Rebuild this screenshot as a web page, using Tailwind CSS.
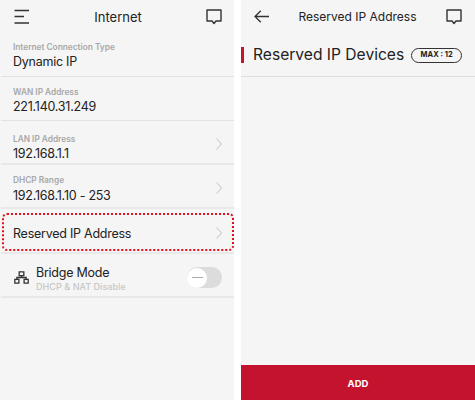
<!DOCTYPE html>
<html lang="en">
<head>
  <meta charset="UTF-8">
  <title>Internet</title>
  <script src="https://cdn.jsdelivr.net/npm/@tailwindcss/browser@4"></script>
</head>
<body class="bg-white font-['Inter',sans-serif] text-[#222]">
  <div class="flex w-[475px] h-[400px] overflow-hidden">

    <!-- left phone -->
    <div class="relative w-[234px] h-full bg-[#f5f5f5] shrink-0">
      <div class="flex items-center justify-between h-[34px] pl-[14px] pr-[12px]">
        <svg class="w-[16px] h-[16px]" viewBox="0 0 16 16" fill="none" stroke="#333" stroke-width="1.3">
          <path d="M0.5 1.5H15M0.5 7.5H10M0.5 14H15"/>
        </svg>
        <span class="text-[13px] leading-none">Internet</span>
        <svg class="w-[16px] h-[16px]" viewBox="0 0 16 16" fill="none" stroke="#333" stroke-width="1.4" stroke-linejoin="round">
          <path d="M1 1H15V12H10L8 14.5L6 12H1Z"/>
        </svg>
      </div>

      <div class="h-[43px] pl-[12px] pt-[8px] border-b border-[#e2e2e2] ml-px">
        <div class="text-[8.3px] leading-[11px] font-semibold text-[#a8a8a8]">Internet Connection Type</div>
        <div class="text-[12.5px] tracking-[-0.25px] leading-[18px]">Dynamic IP</div>
      </div>
      <div class="h-[44px] pl-[12px] pt-[10px] border-b border-[#e2e2e2] ml-px">
        <div class="text-[8.3px] leading-[11px] font-semibold text-[#a8a8a8]">WAN IP Address</div>
        <div class="text-[12.5px] tracking-[-0.25px] leading-[18px]">221.140.31.249</div>
      </div>
      <div class="flex items-start justify-between h-[44px] pl-[12px] pr-[12px] pt-[13px] border-b-2 border-[#e8e8e8] ml-px">
        <div>
          <div class="text-[8.3px] leading-[11px] font-semibold text-[#a8a8a8]">LAN IP Address</div>
          <div class="text-[12.5px] tracking-[-0.25px] leading-[18px]">192.168.1.1</div>
        </div>
        <svg class="w-[6px] h-[12px] mt-[4px]" viewBox="0 0 6 12" fill="none" stroke="#ccc" stroke-width="1.1"><path d="M0.5 0.5L5.5 6L0.5 11.5"/></svg>
      </div>
      <div class="flex items-start justify-between h-[44px] pl-[12px] pr-[12px] pt-[10px] border-b-2 border-[#e8e8e8] ml-px">
        <div>
          <div class="text-[8.3px] leading-[11px] font-semibold text-[#a8a8a8]">DHCP Range</div>
          <div class="text-[12.5px] tracking-[-0.25px] leading-[18px] mt-[1px]">192.168.1.10 - 253</div>
        </div>
        <svg class="w-[6px] h-[12px] mt-[7px]" viewBox="0 0 6 12" fill="none" stroke="#ccc" stroke-width="1.1"><path d="M0.5 0.5L5.5 6L0.5 11.5"/></svg>
      </div>
      <div class="flex items-center justify-between h-[45px] pl-[12px] pr-[12px] pt-[7px] border-b-2 border-[#e8e8e8] ml-px">
        <span class="text-[12.5px] tracking-[-0.25px] leading-none">Reserved IP Address</span>
        <svg class="w-[6px] h-[12px] -mt-[2px]" viewBox="0 0 6 12" fill="none" stroke="#ccc" stroke-width="1.1"><path d="M0.5 0.5L5.5 6L0.5 11.5"/></svg>
      </div>
      <div class="flex items-center h-[44px] pl-[13px] pr-[12px] pt-[7px] border-b-2 border-[#e8e8e8] ml-px">
        <svg class="w-[15px] h-[13px] mr-[7px] -mt-[3px]" viewBox="0 0 16 14" fill="none" stroke="#333" stroke-width="1.4">
          <path d="M5.5 1H10.5V5H5.5ZM0.8 9H5.2V13H0.8ZM10.8 9H15.2V13H10.8ZM8 5V7M3 9V7H13V9"/>
        </svg>
        <div class="flex-1">
          <div class="text-[12.5px] tracking-[-0.25px] leading-[16px]">Bridge Mode</div>
          <div class="text-[9.1px] leading-[12px] font-medium text-[#c8c8c8]">DHCP &amp; NAT Disable</div>
        </div>
        <div class="flex items-center w-[35px] h-[21px] -mt-[2px] rounded-full bg-[#dcdcdc]">
          <div class="flex items-center justify-center w-[20px] h-[20px] rounded-full bg-white">
            <div class="w-[11px] h-[1px] bg-[#aaa]"></div>
          </div>
        </div>
      </div>

      <!-- highlight around the reserved row -->
      <div class="absolute left-[2px] top-[213px] w-[232px] h-[38px] border-[2px] border-dotted border-[#e0101c] rounded-[5px]"></div>
    </div>

    <div class="w-[7px] bg-white shrink-0"></div>

    <!-- right phone -->
    <div class="flex flex-col flex-1 h-full bg-[#f5f5f5]">
      <div class="flex items-center justify-between h-[33px] pl-[13px] pr-[13px]">
        <svg class="w-[15px] h-[13px]" viewBox="0 0 15 13" fill="none" stroke="#333" stroke-width="1.3">
          <path d="M15 6.5H1M6.8 0.7L1 6.5L6.8 12.3"/>
        </svg>
        <span class="text-[12px] leading-none">Reserved IP Address</span>
        <svg class="w-[16px] h-[16px]" viewBox="0 0 16 16" fill="none" stroke="#333" stroke-width="1.4" stroke-linejoin="round">
          <path d="M1 1H15V12H10L8 14.5L6 12H1Z"/>
        </svg>
      </div>
      <div class="flex items-center h-[44px] pt-[1px] border-b border-[#dedede]">
        <div class="w-[3px] h-[16px] bg-[#c8132f] mr-[9px]"></div>
        <span class="text-[15.6px] leading-none">Reserved IP Devices</span>
        <span class="flex items-center justify-center ml-[7px] w-[51px] h-[15px] rounded-full border border-[#333] text-[7.5px] font-bold leading-none">MAX : 12</span>
      </div>
      <div class="flex-1"></div>
      <div class="flex items-center justify-center h-[35px] pt-[3px] bg-[#c4132f] text-white text-[9.5px] font-bold">ADD</div>
    </div>
  </div>
</body>
</html>
